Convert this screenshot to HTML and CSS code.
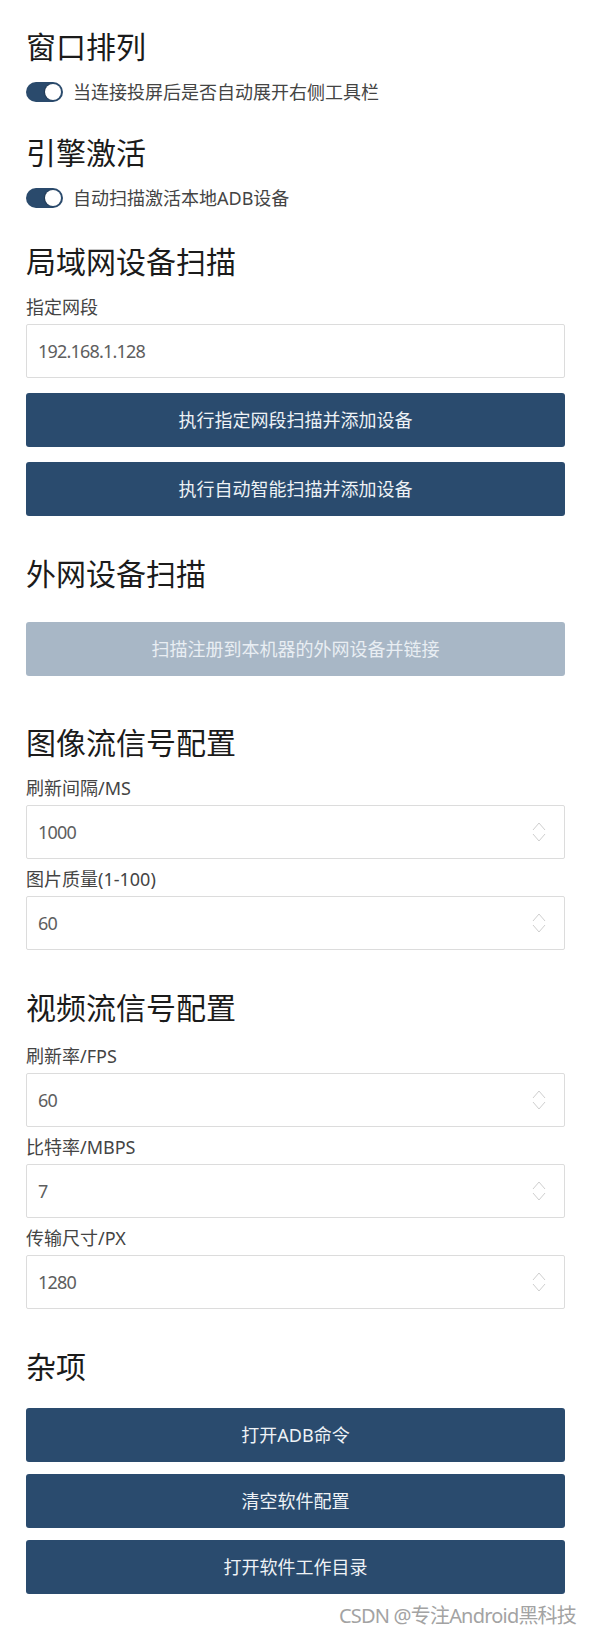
FILE: index.html
```html
<!DOCTYPE html>
<html lang="zh-CN">
<head>
<meta charset="utf-8">
<title>设置</title>
<link rel="stylesheet" href="styles.css">
</head>
<body>
<div class="page">
  <section class="section first">
    <h3 class="title">窗口排列</h3>
    <div class="switch-row">
      <span class="switch"><span class="knob"></span></span>
      <span class="switch-label">当连接投屏后是否自动展开右侧工具栏</span>
    </div>
  </section>

  <section class="section tight">
    <h3 class="title">引擎激活</h3>
    <div class="switch-row">
      <span class="switch"><span class="knob"></span></span>
      <span class="switch-label">自动扫描激活本地ADB设备</span>
    </div>
  </section>

  <section class="section tight2">
    <h3 class="title">局域网设备扫描</h3>
    <div class="field">
      <label class="field-label">指定网段</label>
      <div class="input-box"><input class="input" type="text" value="192.168.1.128"></div>
    </div>
    <div class="btn-stack wide">
      <button class="btn">执行指定网段扫描并添加设备</button>
      <button class="btn">执行自动智能扫描并添加设备</button>
    </div>
  </section>

  <section class="section">
    <h3 class="title spaced">外网设备扫描</h3>
    <button class="btn disabled">扫描注册到本机器的外网设备并链接</button>
  </section>

  <section class="section loose">
    <h3 class="title">图像流信号配置</h3>
    <div class="fields">
      <div class="field">
        <label class="field-label">刷新间隔/MS</label>
        <div class="input-box">
          <input class="input" type="text" value="1000">
          <svg class="spin" width="14" height="24" viewBox="0 0 14 24"><path d="M1 10 L7 3 L13 10 M1 14 L7 21 L13 14" fill="none" stroke="#cfcfcf" stroke-width="1"/></svg>
        </div>
      </div>
      <div class="field">
        <label class="field-label">图片质量(1-100)</label>
        <div class="input-box">
          <input class="input" type="text" value="60">
          <svg class="spin" width="14" height="24" viewBox="0 0 14 24"><path d="M1 10 L7 3 L13 10 M1 14 L7 21 L13 14" fill="none" stroke="#cfcfcf" stroke-width="1"/></svg>
        </div>
      </div>
    </div>
  </section>

  <section class="section">
    <h3 class="title roomy">视频流信号配置</h3>
    <div class="fields">
      <div class="field">
        <label class="field-label">刷新率/FPS</label>
        <div class="input-box">
          <input class="input" type="text" value="60">
          <svg class="spin" width="14" height="24" viewBox="0 0 14 24"><path d="M1 10 L7 3 L13 10 M1 14 L7 21 L13 14" fill="none" stroke="#cfcfcf" stroke-width="1"/></svg>
        </div>
      </div>
      <div class="field">
        <label class="field-label">比特率/MBPS</label>
        <div class="input-box">
          <input class="input" type="text" value="7">
          <svg class="spin" width="14" height="24" viewBox="0 0 14 24"><path d="M1 10 L7 3 L13 10 M1 14 L7 21 L13 14" fill="none" stroke="#cfcfcf" stroke-width="1"/></svg>
        </div>
      </div>
      <div class="field">
        <label class="field-label">传输尺寸/PX</label>
        <div class="input-box">
          <input class="input" type="text" value="1280">
          <svg class="spin" width="14" height="24" viewBox="0 0 14 24"><path d="M1 10 L7 3 L13 10 M1 14 L7 21 L13 14" fill="none" stroke="#cfcfcf" stroke-width="1"/></svg>
        </div>
      </div>
    </div>
  </section>

  <section class="section">
    <h3 class="title mid">杂项</h3>
    <div class="btn-stack">
      <button class="btn">打开ADB命令</button>
      <button class="btn">清空软件配置</button>
      <button class="btn">打开软件工作目录</button>
    </div>
  </section>
</div>
<div class="watermark">CSDN @专注Android黑科技</div>
</body>
</html>
```

FILE: styles.css
```css
html, body {
  margin: 0;
  padding: 0;
  background: #ffffff;
}

body {
  position: relative;
  width: 592px;
  min-height: 1636px;
  font-family: "Noto Sans", "Noto Sans CJK SC", sans-serif;
  color: #333333;
}

.page {
  padding: 27px 27px 0 26px;
}

.section {
  margin-top: 38px;
}

.section.first {
  margin-top: 0;
}

.section.tight {
  margin-top: 29px;
}

.section.tight2 {
  margin-top: 32px;
}

.section.loose {
  margin-top: 47px;
}

.title {
  margin: 0 0 13px;
  font-size: 30px;
  line-height: 40px;
  font-weight: 400;
  color: #1b1b1b;
}

.title.spaced {
  margin-bottom: 28px;
}

.title.roomy {
  margin-bottom: 16px;
}

.title.mid {
  margin-bottom: 21px;
}

.switch-row {
  display: flex;
  align-items: center;
  gap: 10px;
  height: 24px;
}

.switch {
  box-sizing: border-box;
  width: 37px;
  height: 20px;
  padding: 2px;
  border-radius: 10px;
  background: #2a4a6c;
  display: flex;
  justify-content: flex-end;
  align-items: center;
}

.knob {
  width: 16px;
  height: 16px;
  border-radius: 50%;
  background: #ffffff;
  box-shadow: -1px 0 1px rgba(0, 0, 0, 0.25);
}

.switch-label {
  font-size: 18px;
  line-height: 24px;
  color: #444444;
}

.fields {
  display: flex;
  flex-direction: column;
  gap: 8px;
}

.field {
  display: flex;
  flex-direction: column;
  gap: 5px;
}

.field-label {
  font-size: 18px;
  line-height: 24px;
  color: #444444;
}

.input-box {
  box-sizing: border-box;
  height: 54px;
  border: 1px solid #dcdcdc;
  border-radius: 2px;
  background: #ffffff;
  display: flex;
  align-items: center;
  padding: 0 18px 0 11px;
}

.input {
  flex: 1;
  min-width: 0;
  border: none;
  outline: none;
  padding: 0;
  margin: 0;
  background: transparent;
  font-family: "Noto Sans", "Noto Sans CJK SC", sans-serif;
  font-size: 18px;
  letter-spacing: -0.8px;
  color: #5e5e5e;
}

.spin {
  display: block;
  flex: none;
}

.btn-stack {
  display: flex;
  flex-direction: column;
  gap: 12px;
}

.btn-stack.wide {
  margin-top: 15px;
  gap: 15px;
}

.btn {
  box-sizing: border-box;
  display: block;
  width: 100%;
  height: 54px;
  border: none;
  border-radius: 3px;
  background: #2a4b6e;
  color: #eef2f6;
  font-family: "Noto Sans", "Noto Sans CJK SC", sans-serif;
  font-size: 18px;
  line-height: 24px;
  padding: 0;
  cursor: pointer;
}

.btn.disabled {
  background: #a8b7c6;
  color: #e9eef3;
  cursor: default;
}

.watermark {
  position: absolute;
  top: 1601px;
  right: 16px;
  font-family: "Noto Sans", "Noto Sans CJK SC", sans-serif;
  font-size: 20px;
  line-height: 30px;
  color: #a3a3a3;
  letter-spacing: -0.8px;
}
```
